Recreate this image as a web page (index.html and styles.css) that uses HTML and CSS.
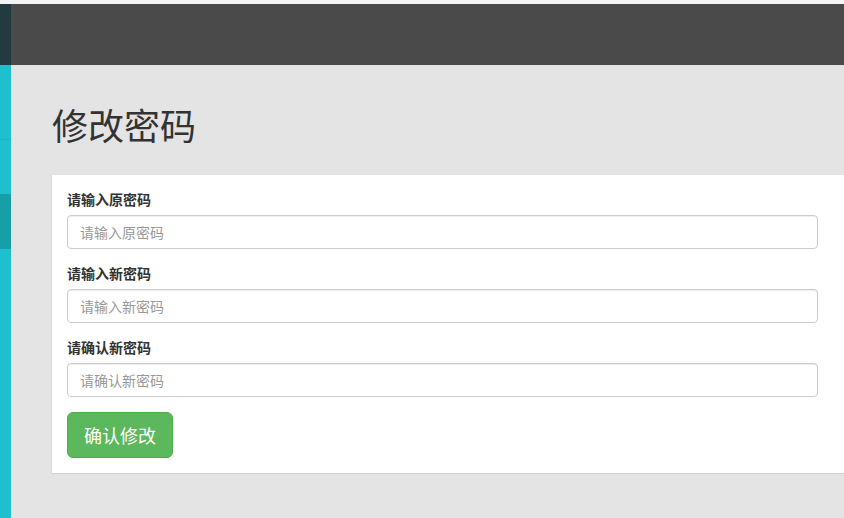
FILE: index.html
```html
<!DOCTYPE html>
<html lang="zh-CN">
<head>
<meta charset="utf-8">
<title>修改密码</title>
<link rel="stylesheet" href="styles.css">
</head>
<body>
<div class="topstrip"></div>
<div class="layout">
  <aside class="sidebar">
    <div class="side-brand"></div>
    <div class="side-item"></div>
    <div class="side-item side-divider"></div>
    <div class="side-item active"></div>
    <div class="side-rest"></div>
  </aside>
  <div class="main">
    <header class="navbar"></header>
    <section class="content">
      <h1 class="page-title">修改密码</h1>
      <form class="panel">
        <div class="form-group">
          <label class="form-label">请输入原密码</label>
          <input class="form-control" type="password" placeholder="请输入原密码">
        </div>
        <div class="form-group">
          <label class="form-label">请输入新密码</label>
          <input class="form-control" type="password" placeholder="请输入新密码">
        </div>
        <div class="form-group">
          <label class="form-label">请确认新密码</label>
          <input class="form-control" type="password" placeholder="请确认新密码">
        </div>
        <button class="btn-success" type="button">确认修改</button>
      </form>
    </section>
  </div>
</div>
</body>
</html>
```
FILE: styles.css
```css
* { box-sizing: border-box; }
html, body { margin: 0; padding: 0; }
body {
  width: 844px;
  height: 518px;
  overflow: hidden;
  background: #e4e4e4;
  font-family: "Noto Sans CJK SC", "Liberation Sans", sans-serif;
  color: #333;
}
.topstrip { height: 4px; background: #f4f4f4; }
.layout { display: flex; height: 514px; }
.sidebar {
  width: 11px;
  flex: none;
  display: flex;
  flex-direction: column;
  background: #1ec0d0;
}
.side-brand { height: 61px; background: #213b3f; }
.side-item { height: 74px; background: #1ec0d0; }
.side-divider { height: 55px; border-top: 1px solid #1bb3c2; }
.side-item.active { height: 55px; background: #169fa6; }
.side-rest { flex: 1; }
.main { flex: 1; display: flex; flex-direction: column; min-width: 0; }
.navbar { height: 61px; background: #4a4a4a; }
.content { flex: 1; padding: 39px 0 0 41px; }
.page-title {
  margin: 0 0 31px;
  font-size: 36px;
  line-height: 40px;
  font-weight: 400;
  color: #333;
}
.panel {
  background: #fff;
  padding: 15px 26px 15px 15px;
  box-shadow: 0 1px 1px rgba(0,0,0,0.08), -1px 0 1px rgba(0,0,0,0.03);
}
.form-group { margin-bottom: 15px; }
.form-label {
  display: block;
  margin-bottom: 7px;
  font-size: 14px;
  line-height: 18px;
  font-weight: 700;
  color: #333;
}
.form-control {
  display: block;
  width: 100%;
  height: 34px;
  padding: 6px 12px;
  font-family: inherit;
  font-size: 14px;
  line-height: 20px;
  color: #555;
  background: #fff;
  border: 1px solid #ccc;
  border-radius: 4px;
  box-shadow: inset 0 1px 1px rgba(0,0,0,0.075);
  outline: none;
}
.form-control::placeholder { color: #999; }
.btn-success {
  display: inline-block;
  height: 46px;
  padding: 10px 16px;
  font-family: inherit;
  font-size: 18px;
  line-height: 24px;
  color: #fff;
  background: #5cb85c;
  border: 1px solid #4cae4c;
  border-radius: 6px;
  cursor: pointer;
}
```
